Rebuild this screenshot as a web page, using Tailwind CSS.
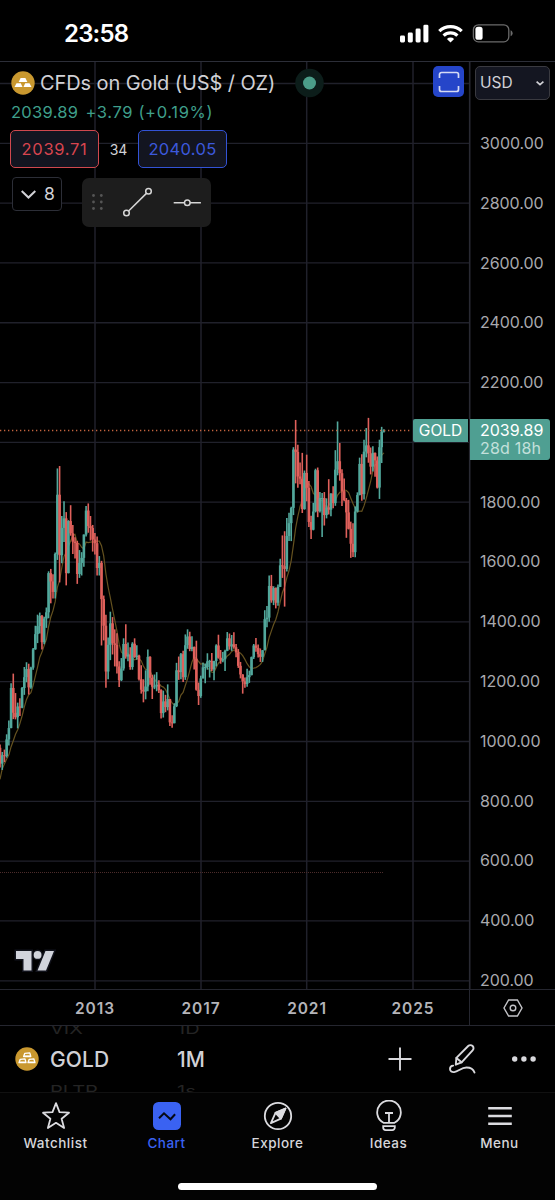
<!DOCTYPE html>
<html lang="en">
<head>
    <meta charset="UTF-8">
    <meta name="viewport" content="width=device-width, initial-scale=1.0">
    <title>GOLD 2039.89</title>
    <script src="https://cdn.jsdelivr.net/npm/@tailwindcss/browser@4"></script>
</head>
<body class="bg-black font-['Inter',sans-serif] text-[#d1d1d6]">
<div class="w-[555px] h-[1200px] flex flex-col overflow-hidden">

    <!-- Status bar -->
    <header class="h-[61px] shrink-0 flex items-center justify-between pl-[64px] pr-[41px] pt-[6px]">
        <div class="text-[24px] leading-none font-semibold text-white tracking-[-0.800px]">23:58</div>
        <svg width="114" height="20" viewBox="0 0 114 20" fill="#fff">
            <rect x="0" y="11.5" width="5" height="7" rx="1.4"/>
            <rect x="7.8" y="8.5" width="5" height="10" rx="1.4"/>
            <rect x="15.6" y="4.5" width="5" height="14" rx="1.4"/>
            <rect x="23.4" y="0.7" width="5" height="17.8" rx="1.4"/>
            <g fill="none" stroke="#fff" stroke-width="3.2">
                <path d="M39.3 7.2a16 16 0 0 1 22.4 0"/>
                <path d="M43.6 11.7a9.8 9.8 0 0 1 13.8 0"/>
            </g>
            <path d="M50.5 18.6l-3.6-3.7a5.2 5.2 0 0 1 7.2 0z"/>
            <rect x="73.4" y="0.800" width="35.4" height="17" rx="5" fill="none" stroke="#6b6b6b" stroke-width="1.3"/>
            <rect x="75.4" y="2.800" width="7.2" height="13" rx="2.6"/>
            <path d="M110.6 6.300v6c1.3-.6 2-1.7 2-3s-.7-2.400-2-3z" fill="#6b6b6b"/>
        </svg>
    </header>

    <!-- Chart -->
    <main class="relative h-[928px] shrink-0 flex">
        <svg id="chart" class="absolute left-0 top-0" width="555" height="928" viewBox="0 61 555 928"></svg>

        <section class="relative w-[470px] flex flex-col pl-[11px]">
            <div class="flex items-center h-[34px] mt-[5px]">
                <svg class="mr-[5px] shrink-0" width="24" height="24" viewBox="0 0 24 24">
                    <circle cx="12" cy="12" r="11.700" fill="#c9982f"/>
                    <g fill="#fff">
                        <path d="M9.600 7h4.800l2 4H7.600z"/>
                        <path d="M5.500 12.200h4.300l1.700 3.800H3.500z"/>
                        <path d="M14.200 12.200h4.300l2 3.800h-8z"/>
                    </g>
                </svg>
                <h1 class="w-[239px] text-[20px] leading-6 tracking-[-0.100px] whitespace-nowrap">CFDs on Gold (US$ / OZ)</h1>
                <svg class="ml-[15px] shrink-0" width="30" height="30" viewBox="0 0 30 30">
                    <circle cx="15.500" cy="15" r="14.300" fill="#0c1d1a"/>
                    <circle cx="15.500" cy="15" r="6.500" fill="#4b9d89"/>
                </svg>
                <div class="ml-auto mr-[6px] mt-[-3px] size-[31px] rounded-[5px] bg-[#2545c9] flex items-center justify-center">
                    <svg width="22" height="22" viewBox="0 0 22 22" fill="none" stroke="#d5dbf5" stroke-width="1.700">
                        <path d="M1.500 7V3.500a2 2 0 0 1 2-2h15a2 2 0 0 1 2 2V7M1.500 15v3.500a2 2 0 0 0 2 2h15a2 2 0 0 0 2-2V15"/>
                    </svg>
                </div>
            </div>
            <div class="flex gap-[7px] h-[24px] items-center text-[16.500px] text-[#3f9f8b]">
                <span class="tracking-[0.300px]">2039.89</span><span class="tracking-[0.650px]">+3.79 (+0.19%)</span>
            </div>
            <div class="flex items-center mt-[6px] h-[38px]">
                <div class="w-[89px] h-[38px] ml-[-1px] rounded-[5px] border border-[#d0484e] bg-[#131520] flex items-center justify-center text-[16.500px] tracking-[0.700px] text-[#d8454f]">2039.71</div>
                <div class="w-[39px] text-center text-[14px]">34</div>
                <div class="w-[89px] h-[38px] rounded-[5px] border border-[#3353d6] bg-[#131520] flex items-center justify-center text-[16.500px] tracking-[0.300px] text-[#3c59dc]">2040.05</div>
            </div>
            <div class="flex items-start mt-[9px]">
                <div class="w-[50px] h-[34px] ml-[1px] rounded-[4px] border border-[#2c2e37] bg-black flex items-center pl-[8px] gap-[8px] text-[17.500px]">
                    <svg width="15" height="9" viewBox="0 0 15 9" fill="none" stroke="#d1d1d6" stroke-width="2"><path d="M0.700 1l6.800 6.500L14.300 1"/></svg>
                    <span>8</span>
                </div>
                <div class="ml-[20px] mt-px w-[129px] h-[49px] rounded-[7px] bg-[#1d1d1d]">
                    <svg width="129" height="49" viewBox="82 178 129 49">
                        <g fill="#555">
                            <circle cx="93.500" cy="195.500" r="1.400"/><circle cx="101.300" cy="195.500" r="1.400"/>
                            <circle cx="93.500" cy="202" r="1.400"/><circle cx="101.300" cy="202" r="1.400"/>
                            <circle cx="93.500" cy="208.500" r="1.400"/><circle cx="101.300" cy="208.500" r="1.400"/>
                        </g>
                        <g fill="none" stroke="#d6d6d6" stroke-width="1.500">
                            <circle cx="126.500" cy="213" r="2.800"/><circle cx="148.500" cy="191.300" r="2.800"/>
                            <path d="M128.600 211L146.400 193.400"/>
                            <circle cx="187.300" cy="202.700" r="2.800"/>
                            <path d="M173.700 202.700h10.800M190.100 202.700h10.800"/>
                        </g>
                    </svg>
                </div>
            </div>
            <svg class="mt-auto mb-[15px] ml-[3px]" width="42" height="26" viewBox="0 0 42 26">
                <g fill="#d1d4dc" stroke="#11131c" stroke-width="3" paint-order="stroke">
                    <path d="M2 3h15.500v19.500H9.500V11H2z"/>
                    <path d="M31.500 3H40L32 22.500h-8.500z"/>
                    <circle cx="23.600" cy="6.900" r="3.900"/>
                </g>
            </svg>
            <div class="absolute right-[2px] top-[358px] h-[23px] w-[55px] rounded-l-[2px] bg-[#4f9f92] text-white text-[15.500px] flex items-center justify-center">GOLD</div>
        </section>

        <!-- Price scale -->
        <aside class="relative w-[85px]">
            <div class="w-[75px] h-[34px] ml-[5px] mt-[5px] rounded-[5px] border border-[#3a3a40] bg-[#141621] flex items-center justify-between pl-[4px] pr-[5px] text-[15.500px]">
                USD
                <svg width="8" height="5" viewBox="0 0 8 5" fill="none" stroke="#d1d1d6" stroke-width="1.700"><path d="M0.600 0.700L4 3.700 7.400 0.700"/></svg>
            </div>
            <div class="mt-[33px] h-[857px] pl-[10px] flex flex-col justify-between text-[16px] leading-5 tracking-[-0.050px] text-[#a9a9ae]">
                <span>3000.00</span><span>2800.00</span><span>2600.00</span><span>2400.00</span><span>2200.00</span>
                <span class="invisible">2000.00</span>
                <span>1800.00</span><span>1600.00</span><span>1400.00</span><span>1200.00</span><span>1000.00</span>
                <span>800.00</span><span>600.00</span><span>400.00</span><span>200.00</span>
            </div>
            <div class="absolute left-0 top-[358px] w-[80px] h-[41px] rounded-r-[3px] bg-[#4f9f92] pl-[10px] pt-[2px] text-[16px] leading-[18px] text-white">
                <div>2039.89</div>
                <div class="text-[#c3e0db] tracking-[0.200px]">28d 18h</div>
            </div>
        </aside>
    </main>

    <!-- Time scale -->
    <div class="h-[37px] shrink-0 flex border-y border-[#25262f]">
        <div class="w-[470px] flex items-center border-r border-[#25262f] pl-[42px] pt-[2px] text-[15.500px] font-semibold tracking-[0.900px] text-[#b4b4b9]">
            <span class="w-[106px] text-center">2013</span><span class="w-[106px] text-center">2017</span><span class="w-[106px] text-center">2021</span><span class="w-[106px] text-center">2025</span>
        </div>
        <div class="w-[85px] flex items-center justify-center">
            <svg width="20" height="18" viewBox="0 0 20 18" fill="none" stroke="#c4c4c8" stroke-width="1.400">
                <path d="M5.600 1h8.800L19 9l-4.600 8H5.600L1 9z"/><circle cx="10" cy="9" r="2.800"/>
            </svg>
        </div>
    </div>

    <!-- Symbol and interval pickers -->
    <div class="h-[67px] shrink-0 flex items-center pl-[15px] overflow-hidden border-b border-[#111]">
        <svg class="mr-[11px] shrink-0" width="24" height="24" viewBox="0 0 24 24">
            <circle cx="12" cy="12" r="11.700" fill="#c9982f"/>
            <g fill="#c9982f" stroke="#fff" stroke-width="1.300" stroke-linejoin="round">
                <path d="M9.800 6.300l5-.5 1 3.700H8.600z"/><path d="M5.200 12.300l4.800-.5 1 3.900H4z"/><path d="M14.200 12.300l4.600-.5 1.200 3.900h-7z"/>
            </g>
            <path d="M9 8.500h6.500v1H9zM4.500 14.500H11v1H4.500zM13.500 14.500H20v1h-6.500z" fill="#fff"/>
        </svg>
        <div class="w-[127px] flex flex-col pt-px">
            <span class="h-[20px] text-[20px] leading-[20px] text-[#242424] origin-left scale-y-[0.7]">VIX</span>
            <span class="my-[9px] h-[24px] text-[21px] leading-[24px] font-medium tracking-[0.100px]">GOLD</span>
            <span class="h-[20px] text-[20px] leading-[20px] text-[#242424] origin-left scale-y-[0.7]">PLTR</span>
        </div>
        <div class="flex flex-col pt-px">
            <span class="h-[20px] text-[20px] leading-[20px] text-[#242424] origin-left scale-y-[0.7]">1D</span>
            <span class="my-[9px] h-[24px] text-[21px] leading-[24px] font-medium">1M</span>
            <span class="h-[20px] text-[20px] leading-[20px] text-[#242424] origin-left scale-y-[0.7]">1s</span>
        </div>
        <div class="ml-auto mr-[17px] flex items-center">
            <svg width="24" height="24" viewBox="0 0 24 24" stroke="#d8d8dc" stroke-width="1.900"><path d="M0.500 12h23M12 0.500v23"/></svg>
            <svg class="ml-[37px]" width="28" height="30" viewBox="0 0 28 30" fill="none" stroke="#d8d8dc" stroke-width="1.900" stroke-linejoin="round" stroke-linecap="round">
                <path d="M6.800 20.700l.6-6.800L19.200 2a3.100 3.100 0 0 1 4.400 0 3.100 3.100 0 0 1 0 4.400L12.600 18.300z"/>
                <path d="M7.400 13.900l5.200 4.400"/>
                <path d="M4.200 21.600c-2 .1-3.200 1.500-3.200 3.400 0 2.200 2 3.400 4.200 3.100 4.200-.6 7-4.600 12.300-4.600 4.200 0 7 2 8 5"/>
            </svg>
            <svg class="ml-[35px]" width="26" height="6" viewBox="0 0 26 6" fill="#d8d8dc"><circle cx="2.700" cy="3" r="2.700"/><circle cx="11.900" cy="3" r="2.700"/><circle cx="21.100" cy="3" r="2.700"/></svg>
        </div>
    </div>

    <!-- Tab bar -->
    <nav class="relative flex-1 grid grid-cols-5 pt-[7px] bg-[#030303] text-[13.500px] font-medium tracking-[0.500px] text-[#d6d6da]">
        <div class="flex flex-col items-center gap-[1px]">
            <svg width="32" height="32" viewBox="0 0 32 32" fill="none" stroke="#dcdce0" stroke-width="1.800" stroke-linejoin="round"><path d="M16 3.200l3.500 8.900 9.500.6-7.400 6 2.500 9.300-8.100-5.200L7.900 28l2.500-9.300-7.400-6 9.500-.6z"/></svg>
            <span>Watchlist</span>
        </div>
        <div class="flex flex-col items-center gap-[1px] text-[#3a62f2]">
            <svg width="32" height="32" viewBox="0 0 32 32"><rect x="2" y="2" width="28" height="28" rx="5.500" fill="#3a62f2"/><path d="M8 18.300l5-5 6.500 6 4.600-5" fill="none" stroke="#050914" stroke-width="2"/></svg>
            <span>Chart</span>
        </div>
        <div class="flex flex-col items-center gap-[1px]">
            <svg width="32" height="32" viewBox="0 0 32 32" fill="none" stroke="#dcdce0" stroke-width="1.800" stroke-linejoin="round"><circle cx="16" cy="16" r="13.200"/><path d="M23.500 8.500l-10 4.300-4.600 10.300 10-4.500z"/><path d="M23.500 8.500l-10 4.300 5.400 5.800z" fill="#dcdce0"/></svg>
            <span>Explore</span>
        </div>
        <div class="flex flex-col items-center gap-[1px]">
            <svg width="32" height="32" viewBox="0 0 32 32" fill="none" stroke="#dcdce0" stroke-width="1.800">
                <path d="M10.500 22.800a11.800 11.800 0 1 1 11 0z"/><path d="M12 13h8M16 13v9.500"/><path d="M10.200 26.200h11.600v1.400a2.500 2.500 0 0 1-2.500 2.500h-6.600a2.500 2.500 0 0 1-2.500-2.500z"/>
            </svg>
            <span>Ideas</span>
        </div>
        <div class="flex flex-col items-center gap-[1px]">
            <svg width="32" height="32" viewBox="0 0 32 32" stroke="#dcdce0" stroke-width="2.400"><path d="M4.200 8.200h23.600M4.200 16h23.600M4.200 23.800h23.600"/></svg>
            <span>Menu</span>
        </div>
        <div class="absolute left-[178px] top-[90px] w-[199px] h-[7px] rounded-full bg-white"></div>
    </nav>
</div>

<script>
    // closes before the first visible month, only used by the moving average
    const warmup = [640, 800, 860, 920, 935, 915, 888, 979];
    // monthly high, low, close from June 2009
    const bars = [
        [990,913,926],[965,905,954],[973,931,951],[1024,946,1007],[1070,987,1045],[1195,1044,1179],[1227,1075,1096],
        [1162,1074,1081],[1130,1044,1117],[1145,1085,1113],[1182,1111,1179],[1249,1156,1215],[1265,1198,1242],[1260,1157,1181],[1250,1176,1247],[1313,1240,1308],[1387,1307,1359],[1424,1329,1386],[1431,1361,1420],
        [1423,1308,1332],[1417,1325,1411],[1448,1380,1432],[1569,1412,1563],[1577,1462,1535],[1559,1478,1500],[1632,1478,1627],[1913,1607,1825],[1921,1532,1623],[1754,1596,1714],[1803,1667,1746],[1767,1522,1563],
        [1740,1562,1737],[1790,1688,1696],[1724,1627,1668],[1683,1612,1664],[1671,1527,1560],[1640,1547,1597],[1633,1555,1614],[1692,1584,1692],[1787,1685,1772],[1796,1698,1720],[1754,1672,1714],[1724,1635,1675],
        [1697,1625,1663],[1685,1555,1580],[1620,1555,1597],[1604,1321,1476],[1488,1338,1387],[1424,1180,1234],[1348,1208,1323],[1434,1272,1395],[1416,1291,1328],[1375,1251,1323],[1362,1227,1251],[1268,1182,1205],
        [1279,1202,1244],[1345,1237,1326],[1392,1277,1284],[1331,1268,1291],[1315,1240,1249],[1332,1240,1327],[1345,1280,1282],[1322,1273,1287],[1290,1204,1208],[1255,1160,1173],[1208,1131,1167],[1238,1141,1184],
        [1308,1168,1283],[1285,1190,1213],[1223,1142,1183],[1224,1175,1184],[1232,1168,1190],[1205,1162,1172],[1175,1077,1095],[1170,1080,1134],[1156,1098,1115],[1191,1104,1142],[1142,1052,1064],[1088,1046,1061],
        [1128,1061,1118],[1263,1115,1238],[1284,1206,1232],[1296,1208,1292],[1303,1199,1215],[1358,1206,1322],[1375,1310,1351],[1367,1302,1309],[1352,1302,1316],[1318,1241,1277],[1337,1170,1173],[1197,1122,1152],
        [1220,1146,1211],[1263,1211,1248],[1261,1195,1249],[1295,1240,1268],[1273,1214,1269],[1296,1236,1241],[1270,1205,1269],[1325,1251,1321],[1357,1277,1280],[1306,1260,1271],[1299,1265,1275],[1307,1236,1303],
        [1366,1302,1345],[1361,1307,1318],[1356,1303,1325],[1365,1310,1315],[1326,1282,1298],[1309,1246,1253],[1266,1211,1224],[1225,1160,1201],[1214,1180,1192],[1243,1183,1215],[1237,1196,1222],[1284,1221,1282],
        [1326,1276,1321],[1346,1300,1313],[1324,1281,1292],[1311,1266,1283],[1306,1266,1305],[1439,1305,1409],[1453,1382,1414],[1555,1400,1520],[1557,1464,1472],[1519,1456,1513],[1515,1445,1464],[1525,1454,1517],
        [1611,1517,1589],[1689,1547,1586],[1703,1451,1577],[1747,1568,1687],[1765,1670,1730],[1785,1670,1781],[1984,1757,1976],[2075,1863,1968],[1992,1848,1886],[1933,1860,1879],[1965,1764,1777],[1906,1775,1898],
        [1959,1803,1848],[1871,1717,1734],[1755,1677,1708],[1798,1706,1769],[1912,1766,1907],[1916,1750,1770],[1834,1766,1814],[1831,1684,1814],[1834,1722,1757],[1813,1746,1783],[1877,1759,1775],[1830,1753,1829],
        [1853,1780,1797],[1974,1788,1909],[2070,1890,1937],[1998,1872,1897],[1910,1787,1837],[1879,1803,1807],[1814,1681,1766],[1808,1709,1711],[1735,1614,1661],[1730,1617,1633],[1786,1616,1769],[1833,1766,1824],
        [1949,1823,1928],[1960,1805,1827],[2009,1809,1969],[2048,1950,1990],[2082,1932,1963],[1983,1893,1919],[1987,1903,1965],[1966,1885,1940],[1953,1846,1849],[2009,1811,1984],[2052,1931,2036],[2044,2033,2040]
    ];
    const x = i => 94.9 + (i - 43) * 2.206;
    const y = p => 143.3 + (3000 - p) * 0.2991;
    let out = '';

    // grid
    for (let p = 3200; p >= 200; p -= 200) {
        out += `<path d="M0 ${y(p)}H470" stroke="#20212b" stroke-width="1.3"/>`;
    }
    for (const gx of [95, 201, 306.7, 413]) {
        out += `<path d="M${gx} 61V989" stroke="#20212b" stroke-width="1.5"/>`;
    }
    out += '<path d="M469.700 61V989" stroke="#282932" stroke-width="1.600"/>';
    out += '<path d="M0 61.500H555" stroke="#2c2e38"/>';

    // moving average, 9 months
    const closes = warmup.concat(bars.map(b => b[2]));
    const avg = bars.map((b, i) => {
        const sum = closes.slice(i, i + 9).reduce((a, c) => a + c, 0);
        return `${x(i).toFixed(1)},${y(sum / 9).toFixed(1)}`;
    });
    out += `<polyline points="${avg.join(' ')}" fill="none" stroke="#64511f" stroke-width="1.2"/>`;

    // candles
    bars.forEach(([h, l, c], i) => {
        const o = closes[i + 7];
        const color = c >= o ? '#52a89c' : '#df605b';
        const top = y(Math.max(o, c));
        const height = Math.max(1, y(Math.min(o, c)) - top);
        out += `<path d="M${x(i)} ${y(h)}V${y(l)}" stroke="${color}" stroke-width="1.6"/>`;
        out += `<rect x="${x(i) - 1.3}" y="${top}" width="2.6" height="${height}" fill="${color}"/>`;
    });

    // last price and lower level
    out += '<path d="M0 430.500H412" stroke="#c4643f" stroke-width="1.300" stroke-dasharray="1.300 2.700"/>';
    out += '<path d="M0 872.500H384" stroke="#4c2c2b" stroke-width="1" stroke-dasharray="1 1"/>';
    document.getElementById('chart').innerHTML = out;
</script>
</body>
</html>
